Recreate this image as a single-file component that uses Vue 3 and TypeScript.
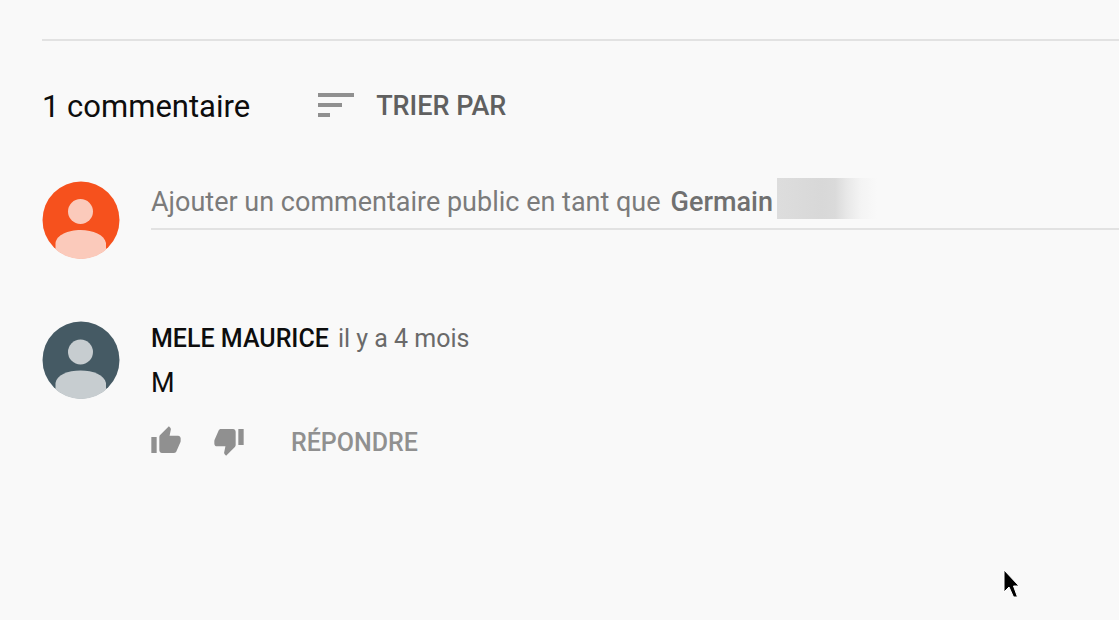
<script setup lang="ts">
import { ref } from 'vue'

interface Comment {
  id: number
  author: string
  age: string
  text: string
}

const comments: Comment[] = [
  { id: 1, author: 'MELE MAURICE', age: 'il y a 4 mois', text: 'M' },
]

const draft = ref('')
</script>

<template>
  <main class="comments">
    <header class="toolbar">
      <h2 class="count">{{ comments.length }} commentaire</h2>
      <button class="sort" type="button">
        <svg class="sort-icon" viewBox="0 0 24 24" aria-hidden="true">
          <path d="M3 18h6v-2H3v2zM3 6v2h18V6H3zm0 7h12v-2H3v2z" />
        </svg>
        <span>TRIER PAR</span>
      </button>
    </header>

    <form class="row composer" @submit.prevent>
      <svg class="avatar own" viewBox="0 0 78 78" aria-hidden="true">
        <clipPath id="own-clip"><circle cx="39" cy="39" r="39" /></clipPath>
        <circle cx="39" cy="39" r="38.500" class="disc" />
        <g clip-path="url(#own-clip)" class="figure">
          <circle cx="38.500" cy="30.500" r="12.500" />
          <path d="M13.500 80V62C14.500 54 26 49 38.500 49S62.500 54 64 62V80z" />
        </g>
      </svg>
      <div class="field">
        <label v-show="!draft" class="prompt" for="draft">
          <span>Ajouter un commentaire public en tant que</span>
          <b>Germain</b>
          <span class="redacted"></span>
        </label>
        <input id="draft" v-model="draft" class="entry" type="text" autocomplete="off" />
      </div>
    </form>

    <article v-for="comment in comments" :key="comment.id" class="row">
      <svg class="avatar other" viewBox="0 0 78 78" aria-hidden="true">
        <clipPath id="other-clip"><circle cx="39" cy="39" r="39" /></clipPath>
        <circle cx="39" cy="39" r="38.500" class="disc" />
        <g clip-path="url(#other-clip)" class="figure">
          <circle cx="38.500" cy="31" r="12.500" />
          <path d="M13.500 80V62C14.500 54 26 49.500 38.500 49.500S62.500 54 64 62V80z" />
        </g>
      </svg>
      <div class="body">
        <p class="meta">
          <a class="author" href="#">{{ comment.author }}</a>
          <a class="age" href="#">{{ comment.age }}</a>
        </p>
        <p class="text">{{ comment.text }}</p>
        <div class="actions">
          <button class="vote" type="button" aria-label="J'aime">
            <svg viewBox="0 0 24 24" aria-hidden="true">
              <path d="M1 21h4V9H1v12zm22-11c0-1.100-.9-2-2-2h-6.310l.95-4.570.03-.32c0-.41-.17-.79-.44-1.060L14.170 1 7.590 7.590C7.220 7.950 7 8.450 7 9v10c0 1.100.9 2 2 2h9c.83 0 1.540-.5 1.840-1.220l3.020-7.050c.09-.23.14-.47.14-.73v-2z" />
            </svg>
          </button>
          <button class="vote" type="button" aria-label="Je n'aime pas">
            <svg viewBox="0 0 24 24" aria-hidden="true">
              <path d="M15 3H6c-.83 0-1.540.5-1.840 1.220l-3.020 7.050c-.09.23-.14.47-.14.73v2c0 1.100.9 2 2 2h6.310l-.95 4.570-.03.32c0 .41.17.79.44 1.060L9.830 23l6.590-6.590c.36-.36.58-.86.58-1.410V5c0-1.100-.9-2-2-2zm4 0v12h4V3h-4z" />
            </svg>
          </button>
          <button class="reply" type="button">RÉPONDRE</button>
        </div>
      </div>
    </article>

    <svg class="pointer" viewBox="0 0 17 30" aria-hidden="true">
      <path d="M1 1V23L6 18L10.500 28H14.500L10.500 17H16z" />
    </svg>
  </main>
</template>

<style>
body {
  margin: 0;
  background: #f9f9f9;
}
</style>

<style scoped>
.comments {
  box-sizing: border-box;
  min-height: 100vh;
  padding: 39px 0 0 42px;
  background: #f9f9f9;
  color: #0d0d0d;
  font-family: Roboto, "Liberation Sans", sans-serif;
  font-size: 27px;
  line-height: 36px;
}

button {
  padding: 0;
  border: 0;
  background: none;
  font: inherit;
  cursor: pointer;
}

.toolbar {
  display: flex;
  align-items: center;
  gap: 62px;
  padding-top: 40px;
  border-top: 2px solid #e2e2e2;
}

.count {
  margin: 0;
  padding-top: 4px;
  font-size: 31px;
  font-weight: 400;
}

.sort {
  display: flex;
  align-items: center;
  gap: 16px;
  color: #606060;
  font-weight: 500;
}

.sort span {
  padding-top: 2px;
}

.sort-icon {
  width: 48px;
  height: 48px;
  fill: #909090;
}

.row {
  display: flex;
  align-items: flex-start;
  gap: 31px;
}

.composer {
  margin: 52px 0 62px;
}

.avatar {
  flex: none;
  width: 78px;
  height: 78px;
}

.own .disc {
  fill: #f6511d;
}

.own .figure {
  fill: #fbcabb;
}

.other .disc {
  fill: #455a64;
}

.other .figure {
  fill: #c7cdd0;
}

.field {
  display: grid;
  flex: 1;
  min-width: 0;
  margin-top: -3px;
  border-bottom: 2px solid #e2e2e2;
}

.prompt,
.entry {
  grid-area: 1 / 1;
}

.prompt {
  display: flex;
  align-items: flex-start;
  height: 50px;
  color: #7b7b7b;
  line-height: 48px;
  white-space: nowrap;
  cursor: text;
}

.prompt b {
  margin: 0 4px 0 10px;
  color: #707070;
  font-weight: 500;
}

.redacted {
  width: 100px;
  height: 41px;
  background: linear-gradient(90deg, #dddddd, #d8d8d8 45%, #dadada 58%, #e8e8e8 70%, #f4f4f4 84%, #f9f9f9);
}

.entry {
  min-width: 0;
  padding: 0;
  border: 0;
  outline: 0;
  background: transparent;
  color: inherit;
  font: inherit;
}

.body {
  flex: 1;
  min-width: 0;
}

.meta,
.text {
  margin: 0;
}

.meta {
  display: flex;
  gap: 9px;
  font-size: 25px;
}

.meta a {
  text-decoration: none;
}

.author {
  color: #0d0d0d;
  font-weight: 500;
}

.age {
  color: #6a6a6a;
}

.text {
  margin-top: 8px;
}

.actions {
  display: flex;
  align-items: center;
  gap: 31px;
  margin: 20px 0 0 -1px;
}

.vote {
  display: flex;
}

.vote svg {
  width: 32px;
  height: 32px;
  fill: #909090;
}

.reply {
  margin-left: 15px;
  padding-top: 4px;
  color: #909090;
  font-size: 25px;
  font-weight: 500;
}

.pointer {
  position: absolute;
  top: 569px;
  left: 1003px;
  width: 17px;
  height: 30px;
  fill: #000;
  stroke: #fff;
  stroke-width: 1;
  pointer-events: none;
}
</style>
